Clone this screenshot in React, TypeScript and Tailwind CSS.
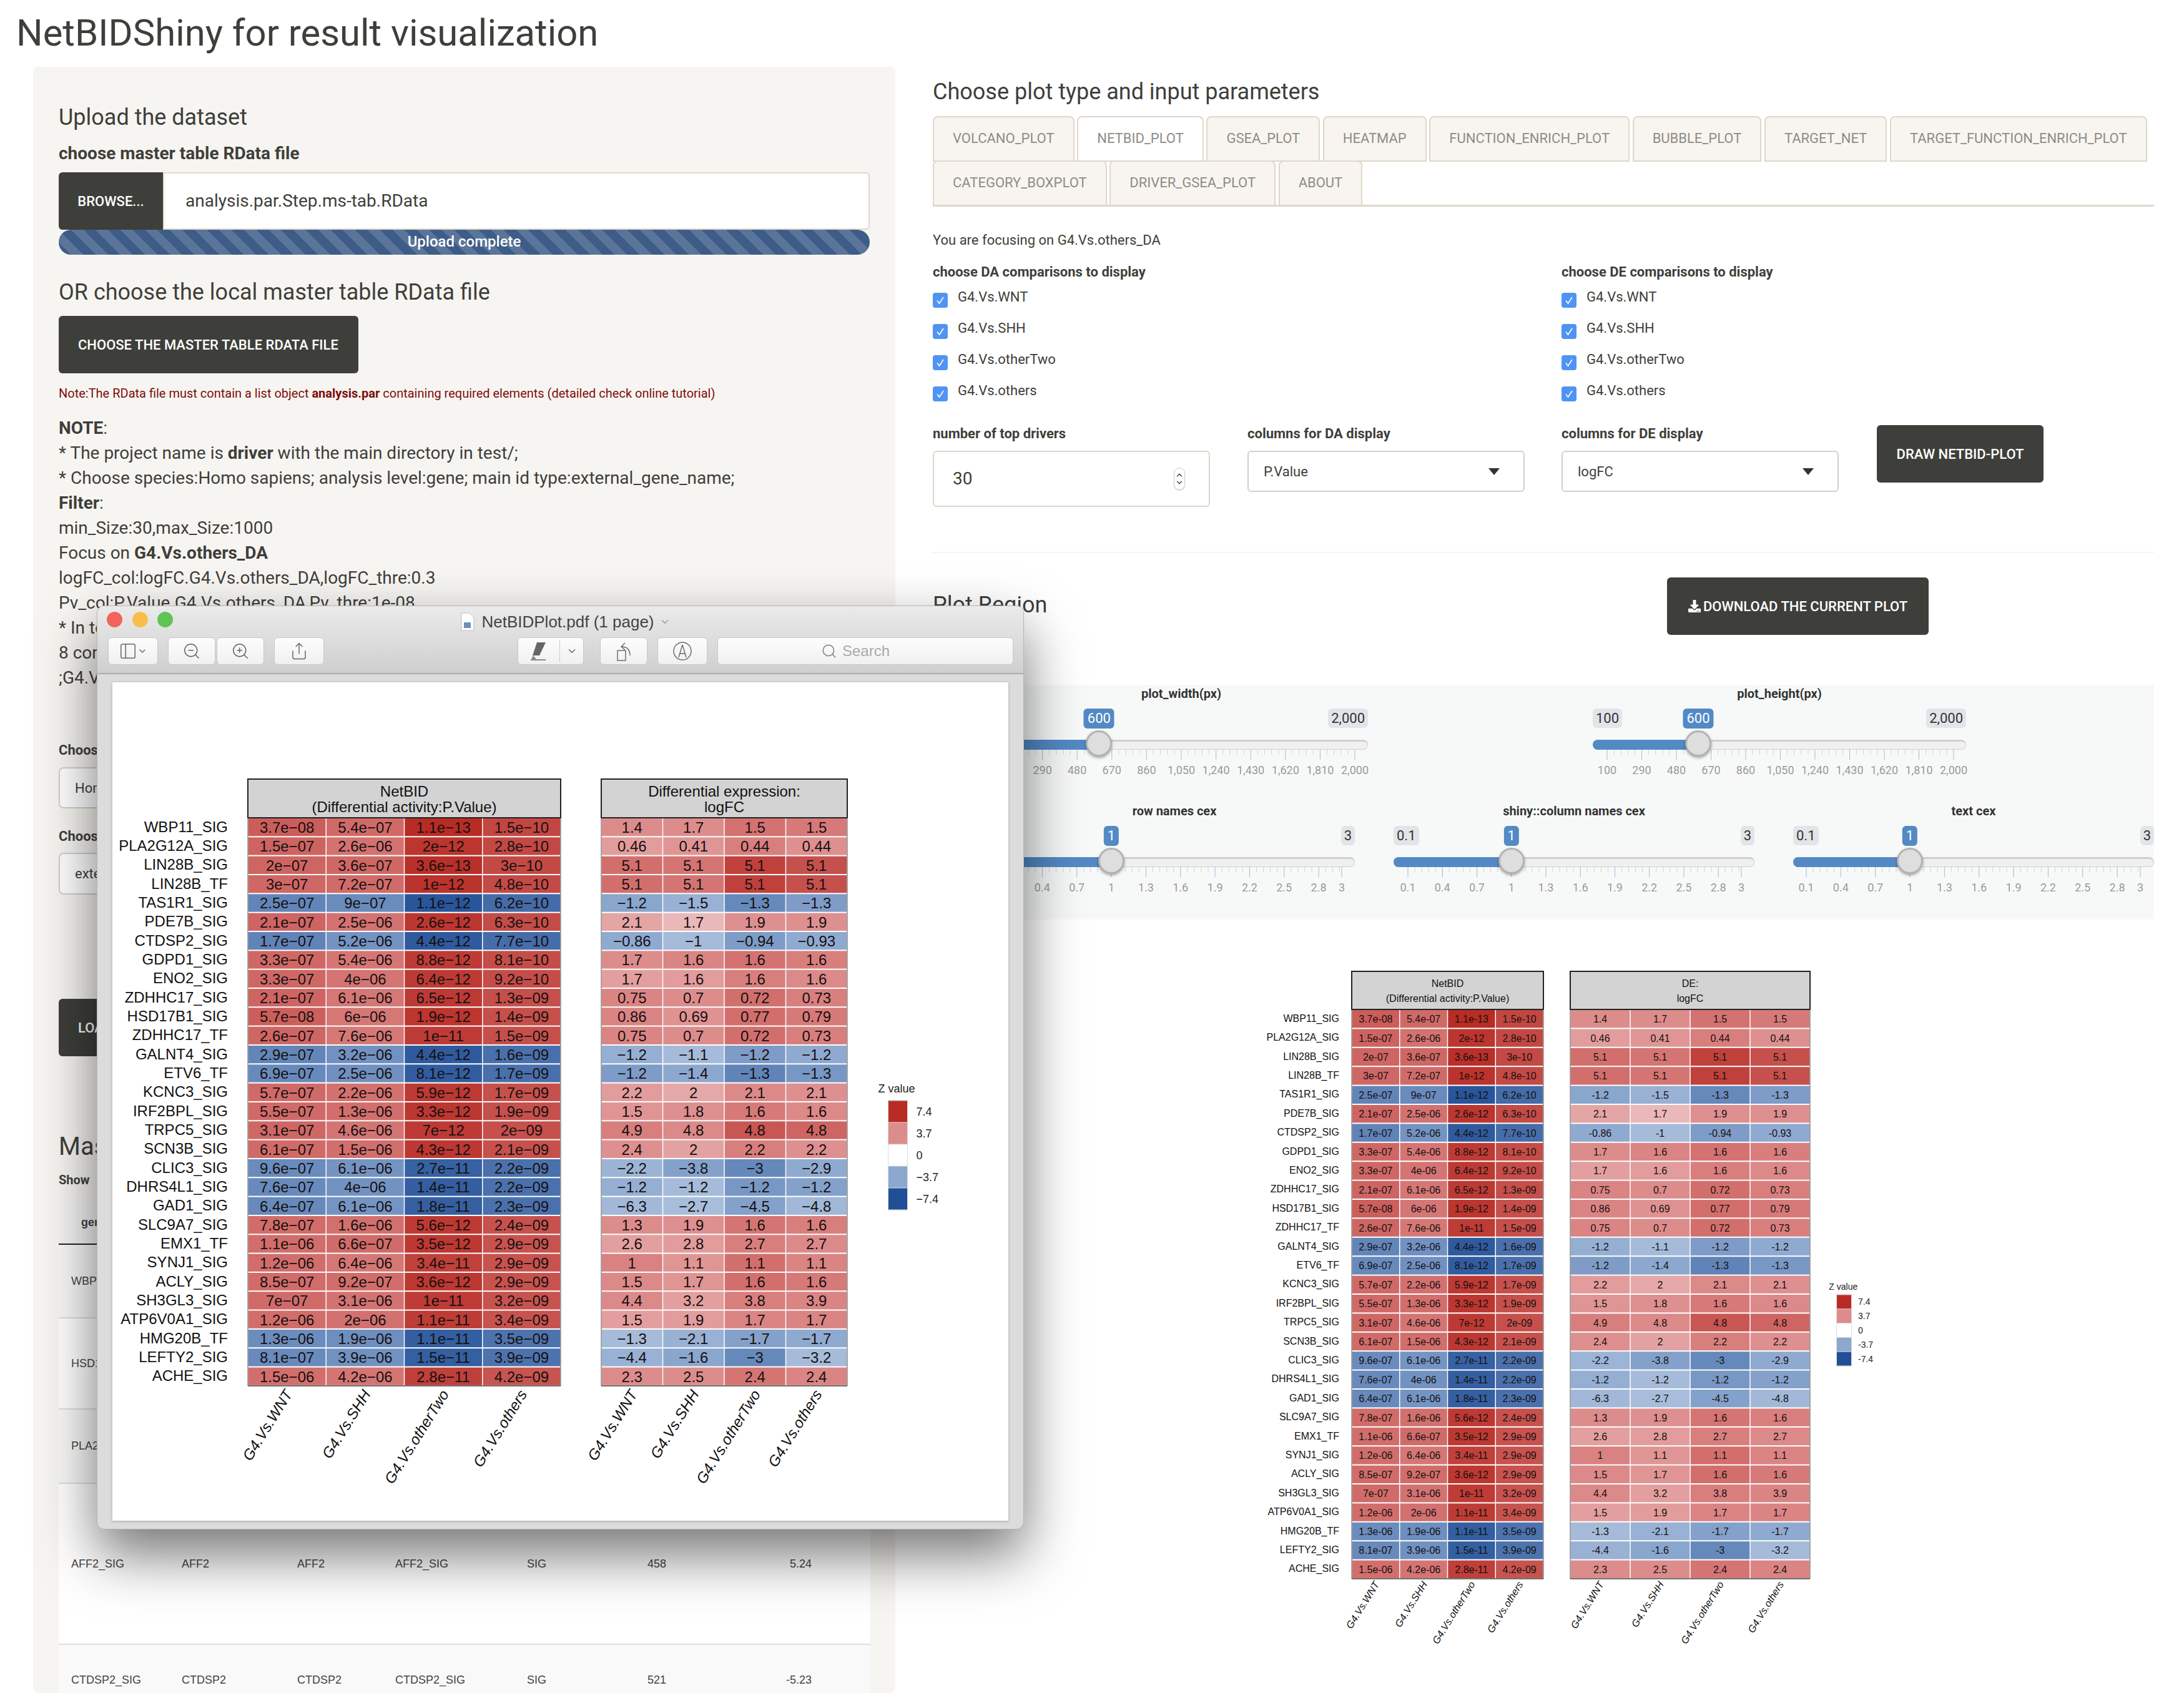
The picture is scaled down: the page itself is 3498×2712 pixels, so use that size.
import { ChevronDown, ChevronUp, PanelLeft, Search, Share, ZoomIn, ZoomOut } from "lucide-react";
import { FaDownload } from "react-icons/fa";

type Row = [string, string, string, string, string, string, string, string, string, number, number, number, number];

// label, four p values, four logFC values, four shades for the logFC cells
const rows: Row[] = [
	["WBP11_SIG", "3.7e-08", "5.4e-07", "1.1e-13", "1.5e-10", "1.4", "1.7", "1.5", "1.5", 3.7, 3.7, 4.7, 4.4],
	["PLA2G12A_SIG", "1.5e-07", "2.6e-06", "2e-12", "2.8e-10", "0.46", "0.41", "0.44", "0.44", 3.2, 3.4, 4.2, 3.6],
	["LIN28B_SIG", "2e-07", "3.6e-07", "3.6e-13", "3e-10", "5.1", "5.1", "5.1", "5.1", 4.8, 4.6, 6.6, 6],
	["LIN28B_TF", "3e-07", "7.2e-07", "1e-12", "4.8e-10", "5.1", "5.1", "5.1", "5.1", 4.8, 4.6, 6.6, 6],
	["TAS1R1_SIG", "2.5e-07", "9e-07", "1.1e-12", "6.2e-10", "-1.2", "-1.5", "-1.3", "-1.3", 3.8, 3.3, 5, 4.2],
	["PDE7B_SIG", "2.1e-07", "2.5e-06", "2.6e-12", "6.3e-10", "2.1", "1.7", "1.9", "1.9", 2.9, 2.3, 3.6, 3.6],
	["CTDSP2_SIG", "1.7e-07", "5.2e-06", "4.4e-12", "7.7e-10", "-0.86", "-1", "-0.94", "-0.93", 3.6, 2.9, 4.2, 3.6],
	["GDPD1_SIG", "3.3e-07", "5.4e-06", "8.8e-12", "8.1e-10", "1.7", "1.6", "1.6", "1.6", 3.7, 4, 4.7, 4.2],
	["ENO2_SIG", "3.3e-07", "4e-06", "6.4e-12", "9.2e-10", "1.7", "1.6", "1.6", "1.6", 3.1, 3.2, 4.2, 3.8],
	["ZDHHC17_SIG", "2.1e-07", "6.1e-06", "6.5e-12", "1.3e-09", "0.75", "0.7", "0.72", "0.73", 4, 3.7, 4.8, 4.2],
	["HSD17B1_SIG", "5.7e-08", "6e-06", "1.9e-12", "1.4e-09", "0.86", "0.69", "0.77", "0.79", 4, 3.5, 4.8, 4.4],
	["ZDHHC17_TF", "2.6e-07", "7.6e-06", "1e-11", "1.5e-09", "0.75", "0.7", "0.72", "0.73", 4, 3.7, 4.8, 4.2],
	["GALNT4_SIG", "2.9e-07", "3.2e-06", "4.4e-12", "1.6e-09", "-1.2", "-1.1", "-1.2", "-1.2", 3.4, 2.9, 4.2, 3.6],
	["ETV6_TF", "6.9e-07", "2.5e-06", "8.1e-12", "1.7e-09", "-1.2", "-1.4", "-1.3", "-1.3", 4.2, 3.7, 5.2, 4.4],
	["KCNC3_SIG", "5.7e-07", "2.2e-06", "5.9e-12", "1.7e-09", "2.2", "2", "2.1", "2.1", 3.2, 2.8, 3.8, 3.6],
	["IRF2BPL_SIG", "5.5e-07", "1.3e-06", "3.3e-12", "1.9e-09", "1.5", "1.8", "1.6", "1.6", 3.4, 3.6, 4.4, 3.8],
	["TRPC5_SIG", "3.1e-07", "4.6e-06", "7e-12", "2e-09", "4.9", "4.8", "4.8", "4.8", 4.2, 3.8, 5.8, 5.2],
	["SCN3B_SIG", "6.1e-07", "1.5e-06", "4.3e-12", "2.1e-09", "2.4", "2", "2.2", "2.2", 3.6, 3, 4.2, 3.6],
	["CLIC3_SIG", "9.6e-07", "6.1e-06", "2.7e-11", "2.2e-09", "-2.2", "-3.8", "-3", "-2.9", 3.2, 4, 5, 3.6],
	["DHRS4L1_SIG", "7.6e-07", "4e-06", "1.4e-11", "2.2e-09", "-1.2", "-1.2", "-1.2", "-1.2", 3.4, 2.9, 4.4, 4],
	["GAD1_SIG", "6.4e-07", "6.1e-06", "1.8e-11", "2.3e-09", "-6.3", "-2.7", "-4.5", "-4.8", 3, 2.8, 4, 3],
	["SLC9A7_SIG", "7.8e-07", "1.6e-06", "5.6e-12", "2.4e-09", "1.3", "1.9", "1.6", "1.6", 3.7, 3.6, 4.6, 4.2],
	["EMX1_TF", "1.1e-06", "6.6e-07", "3.5e-12", "2.9e-09", "2.6", "2.8", "2.7", "2.7", 3.1, 3.2, 4.2, 3.8],
	["SYNJ1_SIG", "1.2e-06", "6.4e-06", "3.4e-11", "2.9e-09", "1", "1.1", "1.1", "1.1", 4.1, 3.4, 4.8, 4],
	["ACLY_SIG", "8.5e-07", "9.2e-07", "3.6e-12", "2.9e-09", "1.5", "1.7", "1.6", "1.6", 3.8, 3.4, 4.8, 4.4],
	["SH3GL3_SIG", "7e-07", "3.1e-06", "1e-11", "3.2e-09", "4.4", "3.2", "3.8", "3.9", 3.8, 3.1, 4.2, 4],
	["ATP6V0A1_SIG", "1.2e-06", "2e-06", "1.1e-11", "3.4e-09", "1.5", "1.9", "1.7", "1.7", 3.1, 3.2, 4, 4],
	["HMG20B_TF", "1.3e-06", "1.9e-06", "1.1e-11", "3.5e-09", "-1.3", "-2.1", "-1.7", "-1.7", 2.9, 3.3, 4, 3.6],
	["LEFTY2_SIG", "8.1e-07", "3.9e-06", "1.5e-11", "3.9e-09", "-4.4", "-1.6", "-3", "-3.2", 3.3, 3.8, 5, 2.9],
	["ACHE_SIG", "1.5e-06", "4.2e-06", "2.8e-11", "4.2e-09", "2.3", "2.5", "2.4", "2.4", 3.7, 3.7, 4.6, 4]
];

const comparisons = ["G4.Vs.WNT", "G4.Vs.SHH", "G4.Vs.otherTwo", "G4.Vs.others"];

const tabs1 = ["VOLCANO_PLOT", "NETBID_PLOT", "GSEA_PLOT", "HEATMAP", "FUNCTION_ENRICH_PLOT", "BUBBLE_PLOT", "TARGET_NET", "TARGET_FUNCTION_ENRICH_PLOT"];
const tabs2 = ["CATEGORY_BOXPLOT", "DRIVER_GSEA_PLOT", "ABOUT"];

function mix(a: number[], b: number[], t: number) {
	const c = a.map((v, i) => Math.round(v + (b[i] - v) * t));
	return `rgb(${c[0]},${c[1]},${c[2]})`;
}

function heatColor(z: number) {
	const m = Math.min(Math.abs(z), 7.4);
	const strong = z > 0 ? [184, 44, 37] : [33, 79, 151];
	const mid = z > 0 ? [221, 140, 140] : [140, 168, 207];
	if (m < 3.7) return mix([255, 255, 255], mid, m / 3.7);
	return mix(mid, strong, (m - 3.7) / 3.7);
}

function zFromP(p: number) {
	const t = Math.sqrt(-2 * Math.log(p / 2));
	return t - (2.515517 + 0.802853 * t + 0.010328 * t * t) / (1 + 1.432788 * t + 0.189269 * t * t + 0.001308 * t * t * t);
}

interface HeatmapProps {
	width: number;
	height: number;
	x1: number;
	w1: number;
	x2: number;
	w2: number;
	top: number;
	headH: number;
	rowH: number;
	labelX: number;
	font: number;
	headLines: [string, string, string, string];
	minus: boolean;
	legendX: number;
	legendY: number;
	swatchW: number;
	swatchH: number;
	legendFont: number;
}

function Heatmap(p: HeatmapProps) {
	const body = p.top + p.headH;
	const bottom = body + rows.length * p.rowH;
	const fmt = (s: string) => (p.minus ? s.replace(/-/g, "\u2212") : s);
	const legend: [number, string][] = [[7.4, "7.4"], [3.7, "3.7"], [0, "0"], [-3.7, "-3.7"], [-7.4, "-7.4"]];
	return (
		<svg width={p.width} height={p.height} className="block font-['Liberation_Sans',Arial,sans-serif]">
			{[0, 1].map(t => {
				const x = t === 0 ? p.x1 : p.x2;
				const w = t === 0 ? p.w1 : p.w2;
				const cw = w / 4;
				return (
					<g key={t}>
						<rect x={x} y={p.top} width={w} height={p.headH} fill="#d3d3d3" stroke="#222" strokeWidth={2} />
						<text x={x + w / 2} y={p.top + p.headH * 0.32} textAnchor="middle" dominantBaseline="central" fontSize={p.font} fill="#111">{p.headLines[t * 2]}</text>
						<text x={x + w / 2} y={p.top + p.headH * 0.72} textAnchor="middle" dominantBaseline="central" fontSize={p.font} fill="#111">{p.headLines[t * 2 + 1]}</text>
						{rows.map((r, i) => (
							<g key={r[0]}>
								{[0, 1, 2, 3].map(c => {
									const value = r[1 + t * 4 + c] as string;
									const negative = r[5].startsWith("-");
									const z = t === 0 ? zFromP(parseFloat(value)) : (r[9 + c] as number);
									return (
										<g key={c}>
											<rect x={x + c * cw + 0.75} y={body + i * p.rowH + 1} width={cw - 1.5} height={p.rowH - 2} fill={heatColor(negative ? -z : z)} />
											<text x={x + c * cw + cw / 2} y={body + i * p.rowH + p.rowH / 2 + 0.5} textAnchor="middle" dominantBaseline="central" fontSize={p.font} fill="#161010">{fmt(value)}</text>
										</g>
									);
								})}
							</g>
						))}
						<line x1={x} y1={body} x2={x} y2={bottom} stroke="#555" strokeWidth={1} />
						<line x1={x + w} y1={body} x2={x + w} y2={bottom} stroke="#555" strokeWidth={1} />
						<line x1={x} y1={bottom} x2={x + w} y2={bottom} stroke="#444" strokeWidth={1.5} />
						{comparisons.map((name, c) => {
							const lx = x + c * cw + cw / 2 + p.font * 0.4;
							const ly = bottom + p.font * 0.55;
							return (
								<text key={name} x={lx} y={ly} textAnchor="end" fontSize={p.font} fontStyle="italic" fill="#111" transform={`rotate(-58 ${lx} ${ly})`}>{name}</text>
							);
						})}
					</g>
				);
			})}
			{rows.map((r, i) => (
				<text key={r[0]} x={p.labelX} y={body + i * p.rowH + p.rowH / 2 - 1} textAnchor="end" dominantBaseline="central" fontSize={p.font} fill="#111">{r[0]}</text>
			))}
			<text x={p.legendX - p.swatchW * 0.55} y={p.legendY - p.swatchH * 0.55} dominantBaseline="central" fontSize={p.legendFont} fill="#222">Z value</text>
			<rect x={p.legendX - 1} y={p.legendY - 1} width={p.swatchW + 2} height={p.swatchH * 5 + 2} fill="#ddd" />
			{legend.map(([z, label], i) => (
				<g key={label}>
					<rect x={p.legendX} y={p.legendY + i * p.swatchH + 0.5} width={p.swatchW} height={p.swatchH - 1} fill={heatColor(z)} />
					<text x={p.legendX + p.swatchW + p.swatchW * 0.48} y={p.legendY + i * p.swatchH + p.swatchH / 2} dominantBaseline="central" fontSize={p.legendFont} fill="#222">{fmt(label)}</text>
				</g>
			))}
		</svg>
	);
}

function Slider({ label, width, start, end, min, max, value, marks, showMin }: { label: string; width: number; start: number; end: number; min: number; max: number; value: number; marks: number[]; showMin: boolean }) {
	const pos = (v: number) => start + ((v - min) / (max - min)) * (end - start);
	const text = (v: number) => v.toLocaleString("en-US");
	const handle = pos(value);
	const minors: number[] = [];
	marks.forEach((m, i) => {
		if (i === marks.length - 1) return;
		const a = pos(m);
		const b = pos(marks[i + 1]);
		const step = (pos(marks[1]) - pos(marks[0])) / 5;
		for (let x = a + step; x < b - 1; x += step) minors.push(x);
	});
	return (
		<div className="h-[188px] shrink-0" style={{ width }}>
			<div className="h-[28px] text-center text-[20px] leading-[28px] font-bold text-[#333]">{label}</div>
			<div className="relative mt-[10px] h-[120px]">
				{showMin && <span className="absolute left-0 top-0 rounded-md bg-[#e1e4e9] px-[5px] text-[22px] leading-[31px] text-[#333]">{text(min)}</span>}
				<span className="absolute right-0 top-0 rounded-md bg-[#e1e4e9] px-[5px] text-[22px] leading-[31px] text-[#333]">{text(max)}</span>
				<span className="absolute top-0 -translate-x-1/2 rounded-md bg-[#5389c5] px-[6px] text-[22px] leading-[32px] text-white" style={{ left: handle }}>{text(value)}</span>
				<div className="absolute left-0 right-0 top-[50px] h-[16px] rounded-full border-t-[3px] border-r border-b border-[#cfcfcf] bg-[#f0f0f0]" />
				<div className="absolute left-0 top-[50px] h-[16px] rounded-l-full bg-[#5389c5]" style={{ width: handle }} />
				<svg width={width} height={18} className="absolute left-0 top-[66px]">
					{minors.map(x => <line key={x} x1={x} x2={x} y1={0} y2={8} stroke="#d0d4d8" strokeWidth={1} />)}
					{marks.map(m => <line key={m} x1={pos(m)} x2={pos(m)} y1={0} y2={16} stroke="#9dbbdc" strokeWidth={1} />)}
				</svg>
				{marks.map(m => (
					<span key={m} className="absolute top-[87px] -translate-x-1/2 text-[18px] leading-[24px] text-[#999]" style={{ left: pos(m) }}>{text(m)}</span>
				))}
				<div className="absolute top-[35px] h-[42px] w-[42px] -translate-x-1/2 rounded-full border-[3px] border-[#b3b3b3] bg-[#dedede] shadow-[0_2px_4px_rgba(0,0,0,0.35)]" style={{ left: handle }} />
			</div>
		</div>
	);
}

function Checks({ title }: { title: string }) {
	return (
		<div>
			<div className="text-[22px] leading-[28px] font-bold">{title}</div>
			{comparisons.map(c => (
				<div key={c} className="flex h-[50px] items-center">
					<span className="mt-[12px] flex h-[24px] w-[24px] items-center justify-center rounded-[4px] bg-[#4f94f3]">
						<svg width="16" height="16" viewBox="0 0 16 16" fill="none" stroke="white" strokeWidth="1.6"><path d="M3 8.5 6.5 13 13 3" /></svg>
					</span>
					<span className="ml-[16px] text-[22px]">{c}</span>
				</div>
			))}
		</div>
	);
}

function DarkButton({ className, children }: { className: string; children: React.ReactNode }) {
	return <button className={`flex h-[92px] items-center rounded-md bg-[#3e3f3a] px-[31px] text-[22px] font-medium text-white uppercase ${className}`}>{children}</button>;
}

function SelectBox({ value }: { value: string }) {
	return (
		<div className="flex h-[66px] items-center justify-between rounded-md border-2 border-[#d0d0d0] bg-white pr-[38px] pl-[24px] text-[22px]">
			{value}
			<svg width="18" height="11" viewBox="0 0 18 11"><path d="M0 0h18L9 11z" fill="#333" /></svg>
		</div>
	);
}

function ToolButton({ className, children }: { className: string; children: React.ReactNode }) {
	return <div className={`flex h-[44px] items-center justify-center rounded-[6px] border border-[#c8c8c8] bg-gradient-to-b from-[#fdfdfd] to-[#f0f0f0] text-[#666] ${className}`}>{children}</div>;
}

function PreviewWindow() {
	return (
		<div className="absolute left-[155px] top-[970px] flex h-[1480px] w-[1485px] flex-col overflow-hidden rounded-[12px] border border-[#b5b5b5] bg-[#dcdcdc] shadow-[0_40px_90px_rgba(0,0,0,0.55)]">
			<div className="h-[109px] shrink-0 border-b-2 border-[#ababab] bg-gradient-to-b from-[#ebebeb] to-[#cfcfcf]">
				<div className="relative flex h-[50px] items-center justify-center pl-[16px] text-[26px] text-[#444] font-['Liberation_Sans',Arial,sans-serif]">
					<span className="absolute left-[15px] top-[9px] h-[25px] w-[25px] rounded-full bg-[#f2645b]" />
					<span className="absolute left-[56px] top-[9px] h-[25px] w-[25px] rounded-full bg-[#f9bd4c]" />
					<span className="absolute left-[96px] top-[9px] h-[25px] w-[25px] rounded-full bg-[#60c454]" />
					<svg width="24" height="30" viewBox="0 0 24 30" className="mr-[10px]">
						<path d="M2 1h13l7 7v21H2z" fill="#fff" stroke="#bbb" />
						<rect x="6" y="16" width="11" height="9" fill="#6d8fb8" />
					</svg>
					NetBIDPlot.pdf (1 page)
					<ChevronDown className="ml-[8px] text-[#999]" size={18} />
				</div>
				<div className="flex pr-[16px] pl-[17px]">
					<ToolButton className="w-[80px]">
						<PanelLeft size={30} strokeWidth={1.2} />
						<ChevronDown size={16} />
					</ToolButton>
					<ToolButton className="ml-[16px] w-[76px]"><ZoomOut size={30} strokeWidth={1.2} /></ToolButton>
					<ToolButton className="ml-[2px] w-[76px]"><ZoomIn size={30} strokeWidth={1.2} /></ToolButton>
					<ToolButton className="ml-[16px] w-[80px]"><Share size={30} strokeWidth={1.2} /></ToolButton>
					<ToolButton className="ml-[310px] w-[106px]">
						<span className="flex w-[67px] justify-center border-r border-[#ccc]">
							<svg width="34" height="36" viewBox="0 0 34 36"><path d="M14 4h14L18 25H7z" fill="#666" /><path d="M4 32h24" stroke="#666" strokeWidth="1.5" /><path d="M5 31l3-6 5 6z" fill="#888" /></svg>
						</span>
						<span className="flex flex-1 justify-center"><ChevronDown size={18} /></span>
					</ToolButton>
					<ToolButton className="ml-[26px] w-[76px]">
						<svg width="32" height="36" viewBox="0 0 32 36" fill="none" stroke="#666" strokeWidth="1.4"><rect x="6" y="17" width="13" height="16" /><path d="M13 11c8 0 13 4 13 14" /><path d="M18 5l-6 6 6 5" /></svg>
					</ToolButton>
					<ToolButton className="ml-[16px] w-[80px]">
						<svg width="36" height="36" viewBox="0 0 36 36" fill="none" stroke="#666" strokeWidth="1.4"><circle cx="18" cy="18" r="14" /><path d="M18 8l6 20M18 8l-6 20M13 22h10" /></svg>
					</ToolButton>
					<ToolButton className="ml-[16px] flex-1 pr-[32px] text-[24px] text-[#aaa] font-['Liberation_Sans',Arial,sans-serif]">
						<Search className="mr-[8px] text-[#777]" size={26} strokeWidth={1.3} />
						Search
					</ToolButton>
				</div>
			</div>
			<div className="mx-[24px] mt-[13px] h-[1343px] bg-white shadow-[0_1px_4px_rgba(0,0,0,0.25)]">
				<Heatmap
					width={1436}
					height={1343}
					x1={217}
					w1={501}
					x2={783}
					w2={394}
					top={155}
					headH={62}
					rowH={30.33}
					labelX={185}
					font={24}
					headLines={["NetBID", "(Differential activity:P.Value)", "Differential expression:", "logFC"]}
					minus
					legendX={1243}
					legendY={670}
					swatchW={30}
					swatchH={35}
					legendFont={18}
				/>
			</div>
		</div>
	);
}

function LeftPanel() {
	const tableRows = [
		{ h: "h-[118px]", bg: "bg-[#f9f9f9]", c: ["WBP11_SIG", "WBP11", "WBP11", "WBP11_SIG", "SIG", "470", "5.41"] },
		{ h: "h-[146px]", bg: "bg-white", c: ["HSD17B1_SIG", "HSD17B1", "HSD17B1", "HSD17B1_SIG", "SIG", "462", "5.30"] },
		{ h: "h-[119px]", bg: "bg-[#f9f9f9]", c: ["PLA2G12A_SIG", "PLA2G12A", "PLA2G12A", "PLA2G12A_SIG", "SIG", "440", "5.27"] },
		{ h: "h-[258px]", bg: "bg-white", c: ["AFF2_SIG", "AFF2", "AFF2", "AFF2_SIG", "SIG", "458", "5.24"] },
		{ h: "h-[114px]", bg: "bg-[#f9f9f9]", c: ["CTDSP2_SIG", "CTDSP2", "CTDSP2", "CTDSP2_SIG", "SIG", "521", "-5.23"] }
	];
	const colW = ["w-[197px]", "w-[185px]", "w-[157px]", "w-[211px]", "w-[193px]", "w-[204px]", "w-[153px]"];
	return (
		<div className="h-[2605px] w-[1381px] shrink-0 rounded-lg bg-[#f7f5f1] px-[41px] pt-[59px]">
			<h2 className="text-[36px] leading-[44px]">Upload the dataset</h2>
			<div className="mt-[20px] text-[28px] leading-[32px] font-bold">choose master table RData file</div>
			<div className="mt-[14px] flex h-[92px]">
				<div className="flex w-[167px] items-center justify-center rounded-l-md bg-[#3e3f3a] text-[22px] font-medium text-white">BROWSE...</div>
				<div className="flex flex-1 items-center rounded-r-md border-2 border-[#dfd7ca] bg-white pl-[34px] text-[28px]">analysis.par.Step.ms-tab.RData</div>
			</div>
			<div className="h-[40px] rounded-full bg-[repeating-linear-gradient(45deg,#3d5c88_0,#3d5c88_14px,#5a7599_14px,#5a7599_28px)] text-center text-[24px] leading-[38px] font-medium text-white">Upload complete</div>
			<h2 className="mt-[38px] text-[36px] leading-[44px]">OR choose the local master table RData file</h2>
			<DarkButton className="mt-[16px] w-[480px]">Choose the master table RData file</DarkButton>
			<div className="mt-[17px] text-[20px] leading-[30px] text-[#7d0d0d]">
				Note:The RData file must contain a list object <b>analysis.par</b> containing required elements (detailed check online tutorial)
			</div>
			<div className="mt-[21px] text-[28px] leading-[40px]">
				<div><b>NOTE</b>:</div>
				<div>* The project name is <b>driver</b> with the main directory in test/;</div>
				<div>* Choose species:Homo sapiens; analysis level:gene; main id type:external_gene_name;</div>
				<div><b>Filter</b>:</div>
				<div>min_Size:30,max_Size:1000</div>
				<div>Focus on <b>G4.Vs.others_DA</b></div>
				<div>logFC_col:logFC.G4.Vs.others_DA,logFC_thre:0.3</div>
				<div>Pv_col:P.Value.G4.Vs.others_DA,Pv_thre:1e-08</div>
				<div>* In total</div>
				<div>8 comparisons</div>
				<div>;G4.Vs.WNT</div>
			</div>
			<div className="mt-[80px] text-[22px] leading-[32px] font-bold">Choose</div>
			<div className="mt-[11px] flex h-[66px] w-[400px] items-center rounded-lg border-2 border-[#cfcfcf] bg-white pl-[24px] text-[22px]">Homo</div>
			<div className="mt-[29px] text-[22px] leading-[32px] font-bold">Choose</div>
			<div className="mt-[10px] flex h-[67px] w-[400px] items-center rounded-lg border-2 border-[#cfcfcf] bg-white pl-[24px] text-[22px]">external</div>
			<DarkButton className="mt-[167px] w-[300px]">Load</DarkButton>
			<h2 className="mt-[117px] text-[40px] leading-[56px]">Master</h2>
			<div className="mt-[11px] text-[20px] leading-[28px] font-bold">Show</div>
			<table className="mt-[21px] w-[1300px] table-fixed text-[18px] font-['Liberation_Sans',Arial,sans-serif] text-[#444]">
				<thead>
					<tr className="h-[68px] border-b-2 border-[#222] bg-[#f5f5f5] font-bold">
						{colW.map((w, i) => <th key={w} className={`${w} ${i === 0 ? "pl-[36px] text-left" : ""}`}>{i === 0 ? "gene" : ""}</th>)}
					</tr>
				</thead>
				<tbody>
					{tableRows.map(r => (
						<tr key={r.c[0]} className={`${r.h} ${r.bg} border-b-2 border-[#dedede]`}>
							{r.c.map((v, i) => (
								<td key={i} className={i === 6 ? "pr-[94px] text-right" : i === 0 ? "pl-[20px]" : ""}>{v}</td>
							))}
						</tr>
					))}
				</tbody>
			</table>
		</div>
	);
}

function RightColumn() {
	const rowMarks = [0.1, 0.4, 0.7, 1, 1.3, 1.6, 1.9, 2.2, 2.5, 2.8, 3];
	const pxMarks = [100, 290, 480, 670, 860, 1050, 1240, 1430, 1620, 1810, 2000];
	const tabClass = "-mb-[2px] h-[73px] rounded-t-lg border-2 px-[30px] text-[22px] leading-[68px] text-[#8e8c84]";
	return (
		<div className="w-[1956px] shrink-0 pt-[17px]">
			<h2 className="text-[36px] leading-[46px]">Choose plot type and input parameters</h2>
			<div className="mt-[16px] border-b-[3px] border-[#dfd7ca]">
				<div className="flex gap-[4.6px]">
					{tabs1.map(t => (
						<div key={t} className={`${tabClass} ${t === "NETBID_PLOT" ? "border-[#dfd7ca] bg-white" : "border-[#dfd7ca] bg-[#f8f5f0]"}`}>{t}</div>
					))}
				</div>
				<div className="flex gap-[4.6px]">
					{tabs2.map(t => <div key={t} className={`${tabClass} border-[#dfd7ca] bg-[#f8f5f0]`}>{t}</div>)}
				</div>
			</div>
			<div className="mt-[39px] text-[22px] leading-[30px]">You are focusing on G4.Vs.others_DA</div>
			<div className="mt-[22px] grid grid-cols-[1007px_1fr]">
				<Checks title="choose DA comparisons to display" />
				<Checks title="choose DE comparisons to display" />
			</div>
			<div className="mt-[31px] grid h-[131px] grid-cols-[504px_503px_505px_1fr]">
				<div className="w-[444px]">
					<div className="text-[22px] leading-[28px] font-bold">number of top drivers</div>
					<div className="mt-[13px] flex h-[90px] items-center justify-between rounded-md border-2 border-[#dfd7ca] bg-white pr-[38px] pl-[30px] text-[28px]">
						30
						<span className="flex h-[36px] w-[18px] flex-col items-center justify-center rounded-full border border-[#ccc] text-[#444] shadow-[0_1px_1px_rgba(0,0,0,0.2)]">
							<ChevronUp size={14} strokeWidth={2.5} className="-mb-[1px]" />
							<ChevronDown size={14} strokeWidth={2.5} className="-mt-[1px]" />
						</span>
					</div>
				</div>
				<div className="w-[444px]">
					<div className="text-[22px] leading-[28px] font-bold">columns for DA display</div>
					<div className="mt-[13px]"><SelectBox value="P.Value" /></div>
				</div>
				<div className="w-[444px]">
					<div className="text-[22px] leading-[28px] font-bold">columns for DE display</div>
					<div className="mt-[13px]"><SelectBox value="logFC" /></div>
				</div>
				<div>
					<DarkButton className="w-[267px] justify-center !px-0">Draw NetBID-plot</DarkButton>
				</div>
			</div>
			<div className="mt-[72px] h-[2px] bg-[#f5f4f0]" />
			<div className="mt-[39px] flex h-[92px] items-center">
				<h2 className="w-[1176px] pb-[4px] text-[36px] leading-[46px]">Plot Region</h2>
				<DarkButton className="w-[419px] justify-center !px-0">
					<FaDownload className="mr-[4px]" size={20} />
					Download the current plot
				</DarkButton>
			</div>
			<div className="mt-[80px] h-[376px] bg-[#f7f9f9]">
				<div className="flex gap-[360px] pl-[99px]">
					<Slider label="plot_width(px)" width={598} start={21} end={577} min={100} max={2000} value={600} marks={pxMarks} showMin />
					<Slider label="plot_height(px)" width={598} start={23} end={578} min={100} max={2000} value={600} marks={pxMarks} showMin />
				</div>
				<div className="flex gap-[62px] pl-[98px]">
					<Slider label="row names cex" width={578} start={22} end={557} min={0.1} max={3} value={1} marks={rowMarks} showMin />
					<Slider label="shiny::column names cex" width={578} start={23} end={557} min={0.1} max={3} value={1} marks={rowMarks} showMin />
					<Slider label="text cex" width={578} start={21} end={556} min={0.1} max={3} value={1} marks={rowMarks} showMin />
				</div>
			</div>
			<div className="mt-[67px] ml-[506px]">
				<Heatmap
					width={1100}
					height={1172}
					x1={165}
					w1={307}
					x2={515}
					w2={384}
					top={16}
					headH={61}
					rowH={30.4}
					labelX={145}
					font={16}
					headLines={["NetBID", "(Differential activity:P.Value)", "DE:", "logFC"]}
					minus={false}
					legendX={942}
					legendY={534}
					swatchW={23}
					swatchH={22.8}
					legendFont={14}
				/>
			</div>
		</div>
	);
}

export default function App() {
	return (
		<div className="relative h-[2712px] w-[3498px] overflow-hidden bg-white font-['Roboto',sans-serif] text-[#3e3f3a]">
			<h1 className="pl-[26px] text-[59.8px] leading-[107px]">NetBIDShiny for result visualization</h1>
			<div className="flex gap-[60px] pl-[53px]">
				<LeftPanel />
				<RightColumn />
			</div>
			<PreviewWindow />
		</div>
	);
}
